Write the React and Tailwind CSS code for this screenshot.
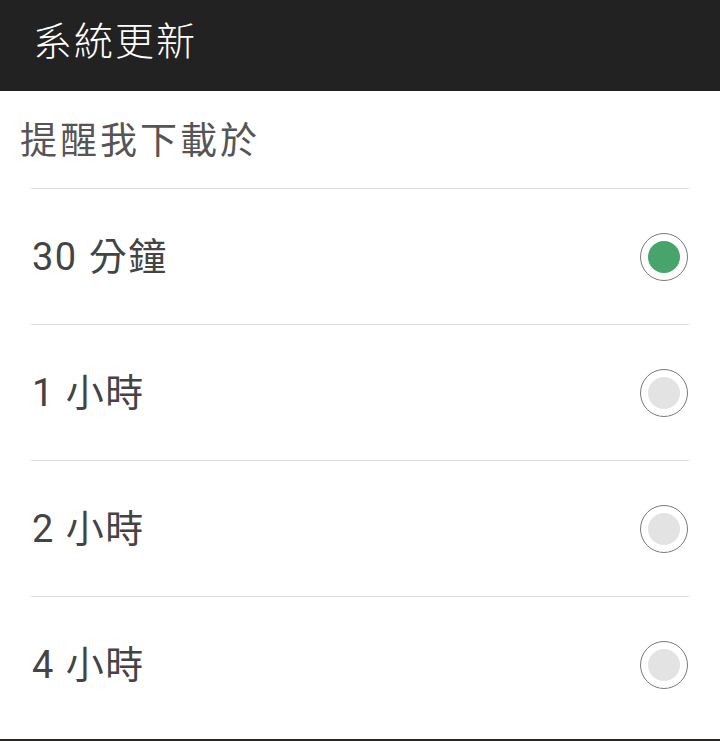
import React, { useState } from 'react';

const options = ['30 分鐘', '1 小時', '2 小時', '4 小時'];

const font = { fontFamily: '"Roboto", "Noto Sans CJK TC", sans-serif' };

const Radio = ({ checked }) => (
    <div className="w-[48px] h-[48px] rounded-full border-[1.5px] border-[#7a7a7a] flex items-center justify-center">
        <div className={`w-[32px] h-[32px] rounded-full ${checked ? 'bg-[#47a46b]' : 'bg-[#e3e3e3]'}`} />
    </div>
);

export default function App() {
    const [selected, setSelected] = useState(0);

    return (
        <div className="w-[720px] h-[741px] flex flex-col bg-[#2a2520] overflow-hidden" style={font}>
            {/* Header */}
            <div className="h-[91px] shrink-0 bg-[#222222] flex items-center pl-[33px]">
                <span className="text-white text-[39px] font-light tracking-[2px] leading-none pb-[6px]">系統更新</span>
            </div>

            {/* Card */}
            <div className="h-[648px] bg-white flex flex-col">
                <div className="h-[97px] flex items-center pl-[20px] pt-[4px]">
                    <span className="text-[37px] text-[#555555] leading-none tracking-[3px]">提醒我下載於</span>
                </div>
                <div className="mx-[31px] border-t-[1.5px] border-[#dddddd]" />
                {options.map((opt, i) => (
                    <div key={opt}>
                        {i > 0 && <div className="mx-[31px] border-t-[1.5px] border-[#dddddd]" />}
                        <button
                            onClick={() => setSelected(i)}
                            className="w-full h-[135px] flex items-center justify-between pl-[32px] pr-[32px]"
                        >
                            <span className="text-[38px] text-[#444444] leading-none tracking-[1.5px]">{opt}</span>
                            <Radio checked={selected === i} />
                        </button>
                    </div>
                ))}
            </div>
        </div>
    );
}
